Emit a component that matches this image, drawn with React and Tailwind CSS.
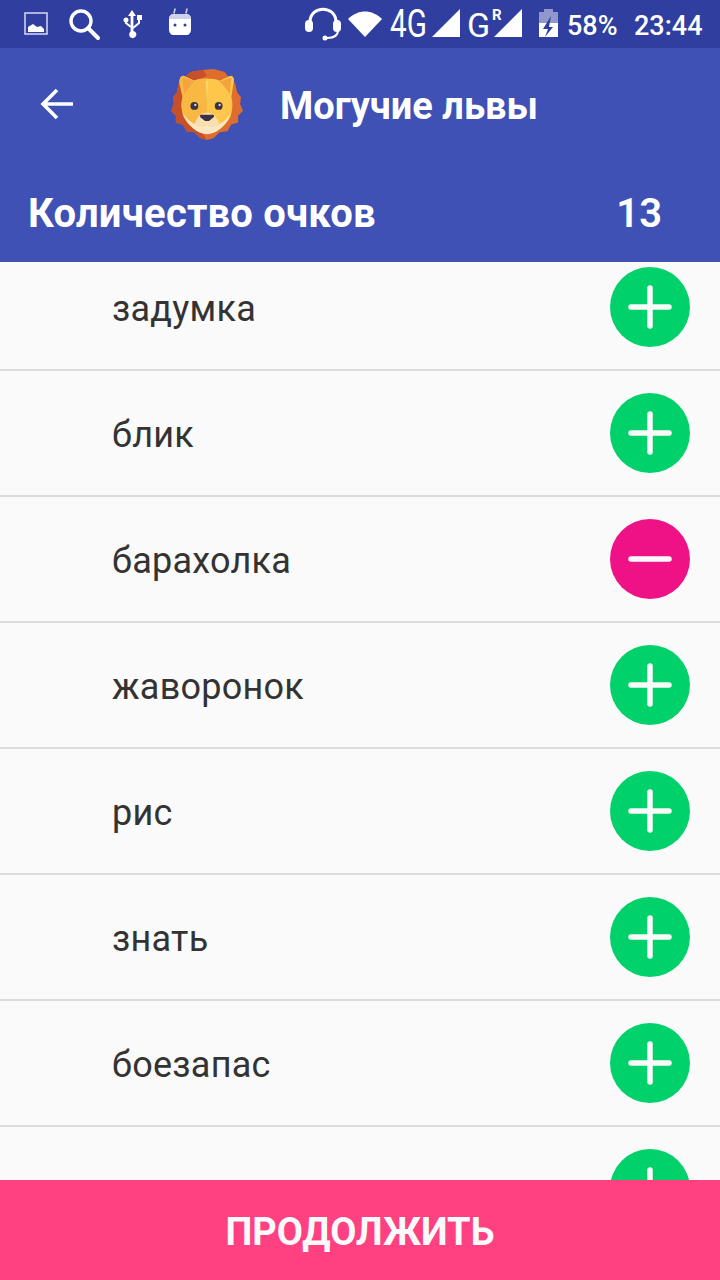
const font = { fontFamily: 'Roboto, sans-serif' };

function Lion() {
  return (
    <svg width="72" height="72" viewBox="0 0 74 74" className="block">
      <path d="M20 4 L31 2 L44 1 L55 4 L60 10 L66 16 L68 25 L72 30 L71 37 L74 44 L69 49 L69 56 L62 58 L58 65 L50 66 L44 72 L37 74 L30 72 L24 66 L16 65 L12 58 L5 56 L5 49 L0 44 L3 37 L2 30 L6 25 L8 16 L14 10 Z" fill="#df6d2d" />
      <path d="M37 8 C32 2 36 2 31 2 L20 4 L14 10 L8 16 L6 25 L2 30 L3 37 L0 44 L5 49 L5 56 L12 58 L16 65 L24 66 L30 72 L37 74 L30 64 L10 40 L22 14 Z" fill="#c5502a" />
      <path d="M9 17 C8 11 10 8 13 8 L24 13 C30 10 44 10 50 13 L61 8 C64 8 66 11 64 17 L62 30 C64 36 63 44 61 50 C56 60 46 67 37 67 C28 67 18 60 13 50 C11 44 10 36 12 30 Z" fill="#fec64a" />
      <path d="M37 11 C31 11 27 11.5 24 13 L13 8 C10 8 8 11 9 17 L12 30 C10 36 11 44 13 50 C18 60 28 67 37 67 Z" fill="#f9b843" />
      <path d="M12 10 L24 14 C20 18 16 23 13.5 27 Z" fill="#f2a43e" />
      <path d="M62 10 L50 14 C54 18 58 23 60.5 27 Z" fill="#f2a43e" />
      <path d="M35.5 13 H38.5 L37 33 Z" fill="#fdd56c" />
      <path d="M12 46 C16 52 20 56 25 58 L49 58 C54 56 58 52 62 46 C57 60 46 68 37 68 C28 68 17 60 12 46 Z" fill="#fbe7c3" />
      <path d="M37 46 C31 46 26 51 24 58 C29 62 34 61 37 59 C40 61 45 62 50 58 C48 51 43 46 37 46 Z" fill="#f8dfb0" />
      <path d="M31 48 H43 C44.5 48 44.5 50 43.5 51 L39 54.5 H35 L30.5 51 C29.5 50 29.5 48 31 48 Z" fill="#3b3345" />
      <circle cx="24" cy="39" r="4" fill="#3b3345" /><circle cx="49" cy="39" r="4" fill="#3b3345" />
      <circle cx="25" cy="38" r="1.2" fill="#d9d9e3" /><circle cx="50" cy="38" r="1.2" fill="#d9d9e3" />
    </svg>
  );
}

function StatusBar() {
  return (
    <div className="h-12 bg-[#303f9f] flex items-center text-white relative shrink-0">
      <svg width="720" height="48" viewBox="0 0 720 48" className="absolute left-0 top-0">
        <rect x="25" y="13" width="22" height="21" fill="none" stroke="#cdd1ea" strokeWidth="1.6" />
        <path d="M28 32 V27 L33 24 L37 27 L41 26 L44 29 V32 Z" fill="#fff" />
        <circle cx="81" cy="21" r="10" fill="none" stroke="#fff" strokeWidth="3.4" />
        <path d="M88 28 L98 38" stroke="#fff" strokeWidth="4" strokeLinecap="round" />
        <path d="M132 10 L136 16 H133.4 V33 H130.6 V16 H128 Z M132 31 A3.6 3.6 0 1 1 131.9 38 A3.6 3.6 0 0 1 132 31 Z" fill="#fff" />
        <path d="M126 19 V23 L131 27 M139 19 V23 L133 28" fill="none" stroke="#fff" strokeWidth="2" />
        <circle cx="126" cy="20" r="2.5" fill="#fff" /><rect x="137" y="15" width="5" height="5" fill="#fff" />
        <path d="M174 13 L175 9 M186 13 L187 9" stroke="#cdd1ea" strokeWidth="1.5" strokeLinecap="round" />
        <path d="M169 19 C169 16 171 14 174 14 H186 C189 14 191 16 191 19 V29 C191 33 189 35 186 35 H174 C171 35 169 33 169 29 Z" fill="#fff" />
        <path d="M169 19 C169 16 171 14 174 14 H186 C189 14 191 16 191 19 Z" fill="#cdd1ea" />
        <circle cx="175" cy="25" r="1.5" fill="#303f9f" /><circle cx="185" cy="25" r="1.5" fill="#303f9f" />
        <path d="M310 28 V22 C310 5 336 5 336 22 V28" fill="none" stroke="#fff" strokeWidth="3" />
        <rect x="305" y="20" width="8" height="12" rx="4" fill="#fff" /><rect x="333" y="20" width="8" height="12" rx="4" fill="#fff" />
        <path d="M338 30 C338 36 334 38 327 38" fill="none" stroke="#fff" strokeWidth="2" />
        <circle cx="325" cy="38" r="2.5" fill="#fff" />
        <path d="M348 19 C358 9 372 9 382 19 L365 37 Z" fill="#fff" />
        <path d="M432 37 L460 9 V37 Z" fill="#fff" />
        <path d="M494 37 L522 9 V37 Z" fill="#fff" />
        <rect x="539" y="12" width="19" height="25" fill="#8f97cd" />
        <rect x="544" y="9" width="9" height="3" fill="#8f97cd" />
        <path d="M539 23 H558 V37 H539 Z" fill="#fff" />
        <path d="M551 16 L543 29 H548 L545 37 L553 27 H549 Z" fill="#303f9f" />
      </svg>
      <span className="absolute left-[390px] top-[2px] text-[38px] leading-[44px] origin-left scale-x-[0.78]">4G</span>
      <span className="absolute left-[467px] top-[3px] text-[34px] leading-[44px]">G</span>
      <span className="absolute left-[492px] top-[8px] text-[15px] leading-[15px] font-bold">R</span>
      <span className="absolute left-[567px] top-[9px] text-[27px] leading-[34px] font-medium">58%</span>
      <span className="absolute left-[634px] top-[9px] text-[27px] leading-[34px] font-medium">23:44</span>
    </div>
  );
}

function Row({ word, removed }) {
  return (
    <div className="h-[126px] shrink-0 border-b-2 border-[#dcdcdc] flex items-center justify-between pl-28 pr-[30px]">
      <span className="text-[36px] leading-[40px] tracking-[0.25px] text-[#333333] mt-[3px]">{word}</span>
      <div className={`w-20 h-20 rounded-full flex items-center justify-center ${removed ? 'bg-[#ef1287]' : 'bg-[#00d16b]'}`}>
        <svg width="46" height="46" viewBox="0 0 46 46">
          <path d="M4 23 H42" stroke="#fafafa" strokeWidth="5.5" strokeLinecap="round" />
          {!removed && <path d="M23 4 V42" stroke="#fafafa" strokeWidth="5.5" strokeLinecap="round" />}
        </svg>
      </div>
    </div>
  );
}

export default function App() {
  const words = ['задумка', 'блик', 'барахолка', 'жаворонок', 'рис', 'знать', 'боезапас', ''];
  return (
    <div style={font} className="w-[720px] h-[1280px] flex flex-col overflow-hidden bg-[#fafafa]">
      <StatusBar />
      <header className="h-[214px] shrink-0 bg-[#3f51b5] text-white flex flex-col z-10">
        <div className="h-[116px] flex items-center pl-[39px]">
          <svg width="35" height="36" viewBox="0 0 35 36" className="mt-[-4px]">
            <path d="M34 18 H4 M18 4 L4 18 L18 32" fill="none" stroke="#fff" strokeWidth="3.6" />
          </svg>
          <div className="ml-[97px] mt-[-4px]"><Lion /></div>
          <h1 className="ml-[37px] text-[38px] leading-[42px] font-bold mt-[-1px]">Могучие львы</h1>
        </div>
        <div className="flex items-center justify-between pl-7 pr-[58px] h-[98px] pt-[2px]">
          <span className="text-[40px] leading-[44px] font-bold tracking-[0.2px]">Количество очков</span>
          <span className="text-[40px] leading-[44px] font-semibold">13</span>
        </div>
      </header>
      <div className="flex-1 min-h-0 overflow-hidden">
        <div className="flex flex-col -mt-[17px]">
          {words.map((w, i) => <Row key={i} word={w} removed={w === 'барахолка'} />)}
        </div>
      </div>
      <button className="h-[100px] shrink-0 bg-[#ff4081] text-[#fafafa] text-[38px] font-bold z-10 pt-1">ПРОДОЛЖИТЬ</button>
    </div>
  );
}
